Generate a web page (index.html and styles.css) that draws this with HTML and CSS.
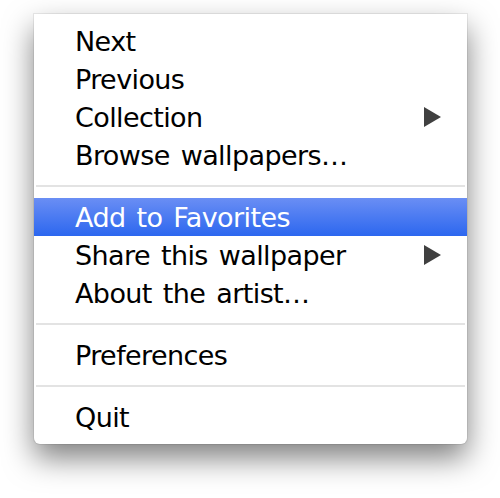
FILE: index.html
```html
<!DOCTYPE html>
<html lang="en">
<head>
    <meta charset="UTF-8">
    <title>Wallpaper menu</title>
    <link rel="stylesheet" href="styles.css">
</head>
<body>
    <div class="stage">
        <ul class="menu">
            <li class="menu-item">Next</li>
            <li class="menu-item">Previous</li>
            <li class="menu-item has-sub">Collection
                <svg class="arrow" width="17" height="20" viewBox="0 0 17 20"><polygon points="0,0 17,10 0,20" /></svg>
            </li>
            <li class="menu-item">Browse wallpapers…</li>
            <li class="sep"></li>
            <li class="menu-item active">Add to Favorites</li>
            <li class="menu-item has-sub">Share this wallpaper
                <svg class="arrow" width="17" height="20" viewBox="0 0 17 20"><polygon points="0,0 17,10 0,20" /></svg>
            </li>
            <li class="menu-item">About the artist…</li>
            <li class="sep"></li>
            <li class="menu-item">Preferences</li>
            <li class="sep"></li>
            <li class="menu-item">Quit</li>
        </ul>
    </div>
</body>
</html>
```

FILE: styles.css
```css
html, body {
    margin: 0;
    min-height: 498px;
    background-color: #ffffff;
    font-family: "DejaVu Sans", Verdana, sans-serif;
}

.stage {
    padding: 14px 0 60px 34px;
}

.menu {
    list-style: none;
    margin: 0;
    padding: 8px 0;
    width: 433px;
    box-sizing: border-box;
    background-color: #ffffff;
    border-radius: 0 0 6px 6px;
    box-shadow: 0 0 0 1px rgba(0, 0, 0, 0.07), 0 14px 30px rgba(0, 0, 0, 0.5);
}

.menu-item {
    display: flex;
    align-items: center;
    justify-content: space-between;
    height: 38px;
    padding: 0 26px 0 41px;
    font-size: 27px;
    letter-spacing: -0.6px;
    word-spacing: 3px;
    color: #000000;
    white-space: nowrap;
}

.menu-item.active {
    background: linear-gradient(#6a8ef4, #2c67ef);
    color: #ffffff;
}

.arrow {
    fill: #404040;
}

.sep {
    height: 24px;
    display: flex;
    align-items: center;
    padding: 0 2px;
}

.sep::after {
    content: "";
    flex: 1;
    height: 2px;
    background-color: #e3e3e3;
}
```
